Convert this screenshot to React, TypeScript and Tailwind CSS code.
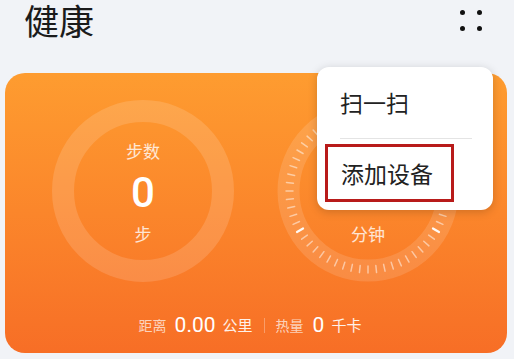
import React from "react";

const cjk = { fontFamily: '"Noto Sans CJK SC", "Noto Sans", sans-serif' };
const num = { fontFamily: 'Roboto, "Noto Sans", sans-serif' };

function Dial() {
  const ticks = [];
  for (let i = 0; i < 60; i++) {
    const a = (i / 60) * Math.PI * 2;
    const r1 = 75;
    const r2 = 82;
    const x1 = 91 + Math.sin(a) * r1;
    const y1 = 91 - Math.cos(a) * r1;
    const x2 = 91 + Math.sin(a) * r2;
    const y2 = 91 - Math.cos(a) * r2;
    const bright = i % 20 === 0;
    ticks.push(
      <line
        key={i}
        x1={x1}
        y1={y1}
        x2={x2}
        y2={y2}
        stroke="white"
        strokeOpacity={bright ? 0.95 : 0.5}
        strokeWidth={bright ? 2.2 : 1.5}
        strokeLinecap="round"
      />
    );
  }
  return (
    <svg width="182" height="182" viewBox="0 0 182 182" className="absolute inset-0">
      <circle cx="91" cy="91" r="79.5" fill="none" stroke="white" strokeOpacity="0.13" strokeWidth="22" />
      {ticks}
    </svg>
  );
}

export default function App() {
  return (
    <div className="relative w-[514px] h-[359px] overflow-hidden bg-[#f1f3f7]" style={cjk}>
      <div className="h-[73px] flex items-start justify-between pl-[24px] pr-[32px]">
        <div className="text-[35px] leading-[44px] -mt-[2px] text-[#1b1b1b]">健康</div>
        <div className="grid grid-cols-2 gap-x-[12px] gap-y-[11px] pt-[9.5px]">
          <span className="w-[5px] h-[5px] rounded-full bg-[#111]" />
          <span className="w-[5px] h-[5px] rounded-full bg-[#111]" />
          <span className="w-[5px] h-[5px] rounded-full bg-[#111]" />
          <span className="w-[5px] h-[5px] rounded-full bg-[#111]" />
        </div>
      </div>

      <div className="ml-[5px] w-[502px] h-[280px] rounded-[20px] bg-gradient-to-b from-[#fe9c30] to-[#f76e26] flex flex-col">
        <div className="flex pl-[47px] pt-[27px] gap-[43px]">
          <div className="w-[182px] h-[182px] rounded-full border-[22px] border-white/[0.14] flex flex-col items-center">
            <div className="mt-[19px] text-[17px] leading-[20px] text-white/80">步数</div>
            <div className="mt-[9px] text-[42px] leading-[46px] font-medium text-white" style={num}>0</div>
            <div className="mt-[8px] text-[17px] leading-[20px] text-white/80">步</div>
          </div>
          <div className="relative w-[182px] h-[182px] flex flex-col items-center">
            <Dial />
            <div className="relative mt-[124px] text-[17px] leading-[20px] text-white/80">分钟</div>
          </div>
        </div>
        <div className="mt-[31px] flex items-center justify-center pr-[12px] text-white">
          <span className="text-[14px] leading-[20px] text-white/70">距离</span>
          <span className="ml-[8px] text-[21px] leading-[24px]" style={num}>0.00</span>
          <span className="ml-[7px] text-[15px] leading-[20px] text-white/90">公里</span>
          <span className="mx-[11px] w-px h-[15px] bg-white/30" />
          <span className="text-[14px] leading-[20px] text-white/70">热量</span>
          <span className="ml-[9px] text-[21px] leading-[24px]" style={num}>0</span>
          <span className="ml-[7px] text-[15px] leading-[20px] text-white/90">千卡</span>
        </div>
      </div>

      <div className="absolute left-[317px] top-[67px] w-[176px] h-[143px] rounded-[12px] bg-white shadow-[0_2px_10px_rgba(0,0,0,0.18)] flex flex-col">
        <div className="h-[71px] pl-[23px] flex items-center text-[23px] text-[#222]">扫一扫</div>
        <div className="ml-[23px] mr-[21px] h-px bg-[#e4e4e4]" />
        <div className="ml-[8px] mt-[5px] w-[129px] h-[58px] border-[3px] border-[#b81b1a] pl-[13px] flex items-center text-[23px] text-[#222]">
          添加设备
        </div>
      </div>
    </div>
  );
}
